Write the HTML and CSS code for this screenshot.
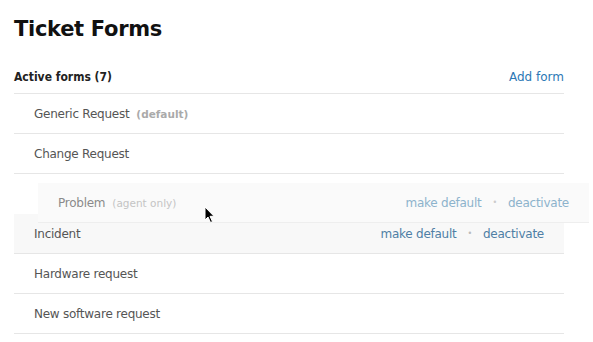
FILE: index.html
```html
<!DOCTYPE html>
<html>
<head>
<meta charset="utf-8">
<link rel="stylesheet" href="styles.css">
</head>
<body>
<div class="page">
  <h1 class="title">Ticket Forms</h1>
  <div class="list-head">
    <span class="list-title">Active forms (7)</span>
    <a class="add-link">Add form</a>
  </div>
  <ul class="forms">
    <li class="row"><span class="name">Generic Request</span><span class="tag">(default)</span></li>
    <li class="row"><span class="name">Change Request</span></li>
    <li class="row placeholder"></li>
    <li class="row hover">
      <span class="name">Incident</span>
      <span class="actions"><a class="act">make default</a><span class="dot">•</span><a class="act">deactivate</a></span>
    </li>
    <li class="row"><span class="name">Hardware request</span></li>
    <li class="row"><span class="name">New software request</span></li>
  </ul>
  <div class="row ghost">
    <span class="name">Problem</span><span class="tag light">(agent only)</span>
    <span class="actions"><a class="act">make default</a><span class="dot">•</span><a class="act">deactivate</a></span>
  </div>
  <svg class="cursor" width="12" height="18" viewBox="0 0 12 18">
    <path d="M1 1 L1 14 L4 11 L6.5 16.5 L8.5 15.6 L6 10.3 L10 10.3 Z" fill="#000" stroke="#fff" stroke-width="1"/>
  </svg>
</div>
</body>
</html>
```
FILE: styles.css
```css
html, body {
  margin: 0;
  padding: 0;
  background: #fff;
}
body {
  font-family: "DejaVu Sans", Verdana, sans-serif;
  color: #555;
}
.page {
  position: relative;
  padding: 0 29px 0 14px;
}
.title {
  margin: 0;
  padding-top: 16px;
  font-size: 21px;
  line-height: 26px;
  font-weight: bold;
  color: #111;
  letter-spacing: -0.3px;
}
.list-head {
  display: flex;
  justify-content: space-between;
  align-items: flex-end;
  height: 52px;
  padding-bottom: 9px;
  box-sizing: border-box;
  border-bottom: 1px solid #e6e6e6;
}
.list-title {
  font-family: "DejaVu Sans Condensed", "DejaVu Sans", sans-serif;
  font-size: 12px;
  font-weight: bold;
  color: #222;
}
.add-link {
  font-size: 12px;
  color: #2b78b5;
}
.forms {
  list-style: none;
  margin: 0;
  padding: 0;
}
.row {
  display: flex;
  align-items: center;
  height: 40px;
  box-sizing: border-box;
  padding: 0 20px;
  border-bottom: 1px solid #e6e6e6;
  font-size: 12px;
  letter-spacing: -0.25px;
}
.row.placeholder {
  border-bottom: none;
}
.row.hover {
  background: #f8f8f8;
}
.name {
  color: #555;
}
.tag {
  margin-left: 7px;
  font-size: 10.5px;
  font-weight: bold;
  color: #aaa;
  letter-spacing: 0;
}
.tag.light {
  font-weight: normal;
  color: #c4c4c4;
}
.actions {
  margin-left: auto;
  display: flex;
  align-items: center;
}
.act {
  color: #4f7fa5;
}
.dot {
  color: #bbb;
  font-size: 8px;
  margin: 0 11px;
}
.ghost {
  position: absolute;
  left: 38px;
  top: 183px;
  width: 551px;
  background: rgba(250, 250, 250, 0.95);
  border-bottom: 1px solid #eee;
}
.ghost .name {
  color: #8a8a8a;
}
.ghost .act {
  color: #8db3cc;
}
.ghost .dot {
  color: #ccc;
}
.cursor {
  position: absolute;
  left: 204px;
  top: 206px;
}
```
